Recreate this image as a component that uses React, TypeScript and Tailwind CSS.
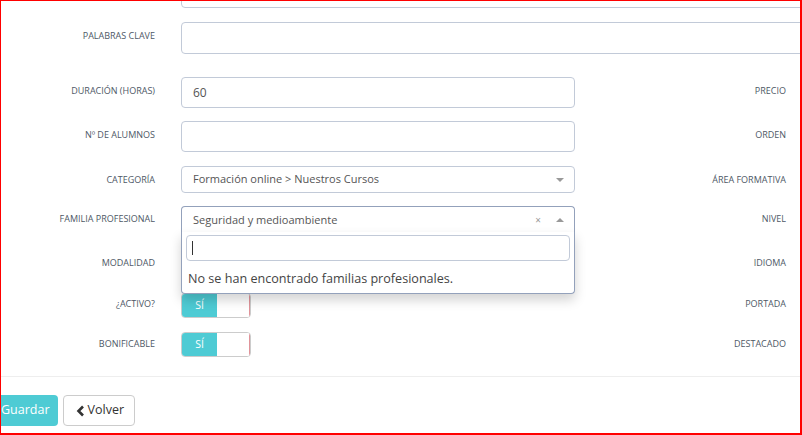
import React from "react";

const font = { fontFamily: '"Open Sans", "Liberation Sans", sans-serif' };

function Label({ text, pt = "pt-[7px]" }: { text: string; pt?: string }) {
  return (
    <div
      className={`w-[155px] shrink-0 text-right text-[9px] leading-[14px] uppercase text-[#4e5866] ${pt}`}
    >
      {text}
    </div>
  );
}

function RightLabel({ text, pt = "pt-[7px]" }: { text: string; pt?: string }) {
  return (
    <div
      className={`w-[211px] shrink-0 text-right text-[9px] leading-[14px] uppercase text-[#4e5866] ${pt}`}
    >
      {text}
    </div>
  );
}

function Input({ value = "", h = "h-[31px]" }: { value?: string; h?: string }) {
  return (
    <div
      className={`w-[394px] shrink-0 ml-[26px] ${h} border border-[#c2cad8] rounded-[4px] bg-white px-[11px] flex items-center text-[12px] text-[#555]`}
    >
      {value}
    </div>
  );
}

function Arrow({ up = false }: { up?: boolean }) {
  return (
    <span
      className={`w-0 h-0 border-l-[4px] border-r-[4px] border-l-transparent border-r-transparent ${
        up ? "border-b-[4px] border-b-[#999]" : "border-t-[4px] border-t-[#999]"
      }`}
    />
  );
}

function Toggle() {
  return (
    <div className="w-[70px] shrink-0 ml-[26px] h-[25px] border border-[#ccc] rounded-[4px] flex overflow-hidden">
      <div className="w-[35px] bg-[#4ecbd4] text-white text-[10.5px] flex items-center justify-center">
        SÍ
      </div>
      <div className="flex-1 bg-white border-r border-r-[#e0939a]" />
    </div>
  );
}

export default function App() {
  return (
    <div
      style={font}
      className="w-[802px] h-[435px] overflow-hidden bg-white border-t border-l border-r-2 border-b-2 border-[#ff0000]"
    >
      <div className="w-[1300px] -ml-px -mt-px">
        {/* cut off field at the top */}
        <div className="flex -mt-[25px]">
          <div className="w-[155px] shrink-0" />
          <div className="w-[1000px] shrink-0 ml-[26px] h-[32px] border border-[#c2cad8] rounded-[4px]" />
        </div>

        <div className="flex mt-[14px]">
          <Label text="Palabras clave" />
          <div className="w-[1000px] shrink-0 ml-[26px] h-[32px] border border-[#c2cad8] rounded-[4px]" />
        </div>

        <div className="flex mt-[23px]">
          <Label text="Duración (horas)" />
          <Input value="60" />
          <RightLabel text="Precio" />
          <Input />
        </div>

        <div className="flex mt-[13px]">
          <Label text="Nº de alumnos" />
          <Input />
          <RightLabel text="Orden" />
          <Input />
        </div>

        <div className="flex mt-[14px]">
          <Label text="Categoría" />
          <div className="w-[394px] shrink-0 ml-[26px] h-[27px] border border-[#c2cad8] rounded-[4px] pl-[11px] pr-[10px] flex items-center justify-between text-[11px] text-[#555]">
            <span>Formación online &gt; Nuestros Cursos</span>
            <Arrow />
          </div>
          <RightLabel text="Área formativa" />
          <Input h="h-[27px]" />
        </div>

        <div className="flex mt-[13px] relative z-10">
          <Label text="Familia profesional" pt="pt-[6px]" />
          <div className="w-[394px] shrink-0 ml-[26px] relative">
            <div className="h-[27px] border border-b-0 border-[#93a1bb] rounded-t-[4px] bg-white pl-[11px] pr-[10px] flex items-center text-[11px] text-[#555]">
              <span className="flex-1">Seguridad y medioambiente</span>
              <span className="text-[10px] text-[#999] mr-[15px] leading-none">×</span>
              <Arrow up />
            </div>
            <div className="absolute left-0 right-0 top-[26px] border border-t-0 border-[#93a1bb] rounded-b-[4px] bg-white shadow-[0_6px_12px_rgba(0,0,0,0.175)]">
              <div className="px-[4px] pt-[3px]">
                <div className="h-[26px] border border-[#c2cad8] rounded-[4px] flex items-center pl-[5px]">
                  <span className="w-px h-[14px] bg-[#333]" />
                </div>
              </div>
              <div className="px-[6px] pt-[9px] pb-[5px] text-[12.6px] leading-[18px] text-[#444]">
                No se han encontrado familias profesionales.
              </div>
            </div>
          </div>
          <RightLabel text="Nivel" pt="pt-[6px]" />
          <Input h="h-[27px]" />
        </div>

        <div className="flex mt-[16px]">
          <Label text="Modalidad" />
          <Input h="h-[27px]" />
          <RightLabel text="Idioma" />
          <Input h="h-[27px]" />
        </div>

        <div className="flex mt-[17px]">
          <Label text="¿Activo?" pt="pt-[4px]" />
          <Toggle />
          <div className="w-[324px] shrink-0" />
          <RightLabel text="Portada" pt="pt-[4px]" />
        </div>

        <div className="flex mt-[14px]">
          <Label text="Bonificable" pt="pt-[5px]" />
          <Toggle />
          <div className="w-[324px] shrink-0" />
          <RightLabel text="Destacado" pt="pt-[5px]" />
        </div>

        <div className="mt-[19px] border-t border-[#eee]" />

        <div className="flex gap-[5px] mt-[18px] -ml-[10px]">
          <button className="h-[31px] pl-[11px] pr-[8px] rounded-[4px] bg-[#4ecbd4] text-white text-[12.5px]">
            Guardar
          </button>
          <button className="h-[31px] pl-[12px] pr-[10px] rounded-[4px] border border-[#ccc] bg-white text-[#333] text-[12.5px] flex items-center gap-[3px]">
            <svg width="9" height="12" viewBox="0 0 9 12">
              <path d="M7 1.5 L2.5 6 L7 10.5" fill="none" stroke="#333" strokeWidth="2.6" />
            </svg>
            Volver
          </button>
        </div>
      </div>
    </div>
  );
}
